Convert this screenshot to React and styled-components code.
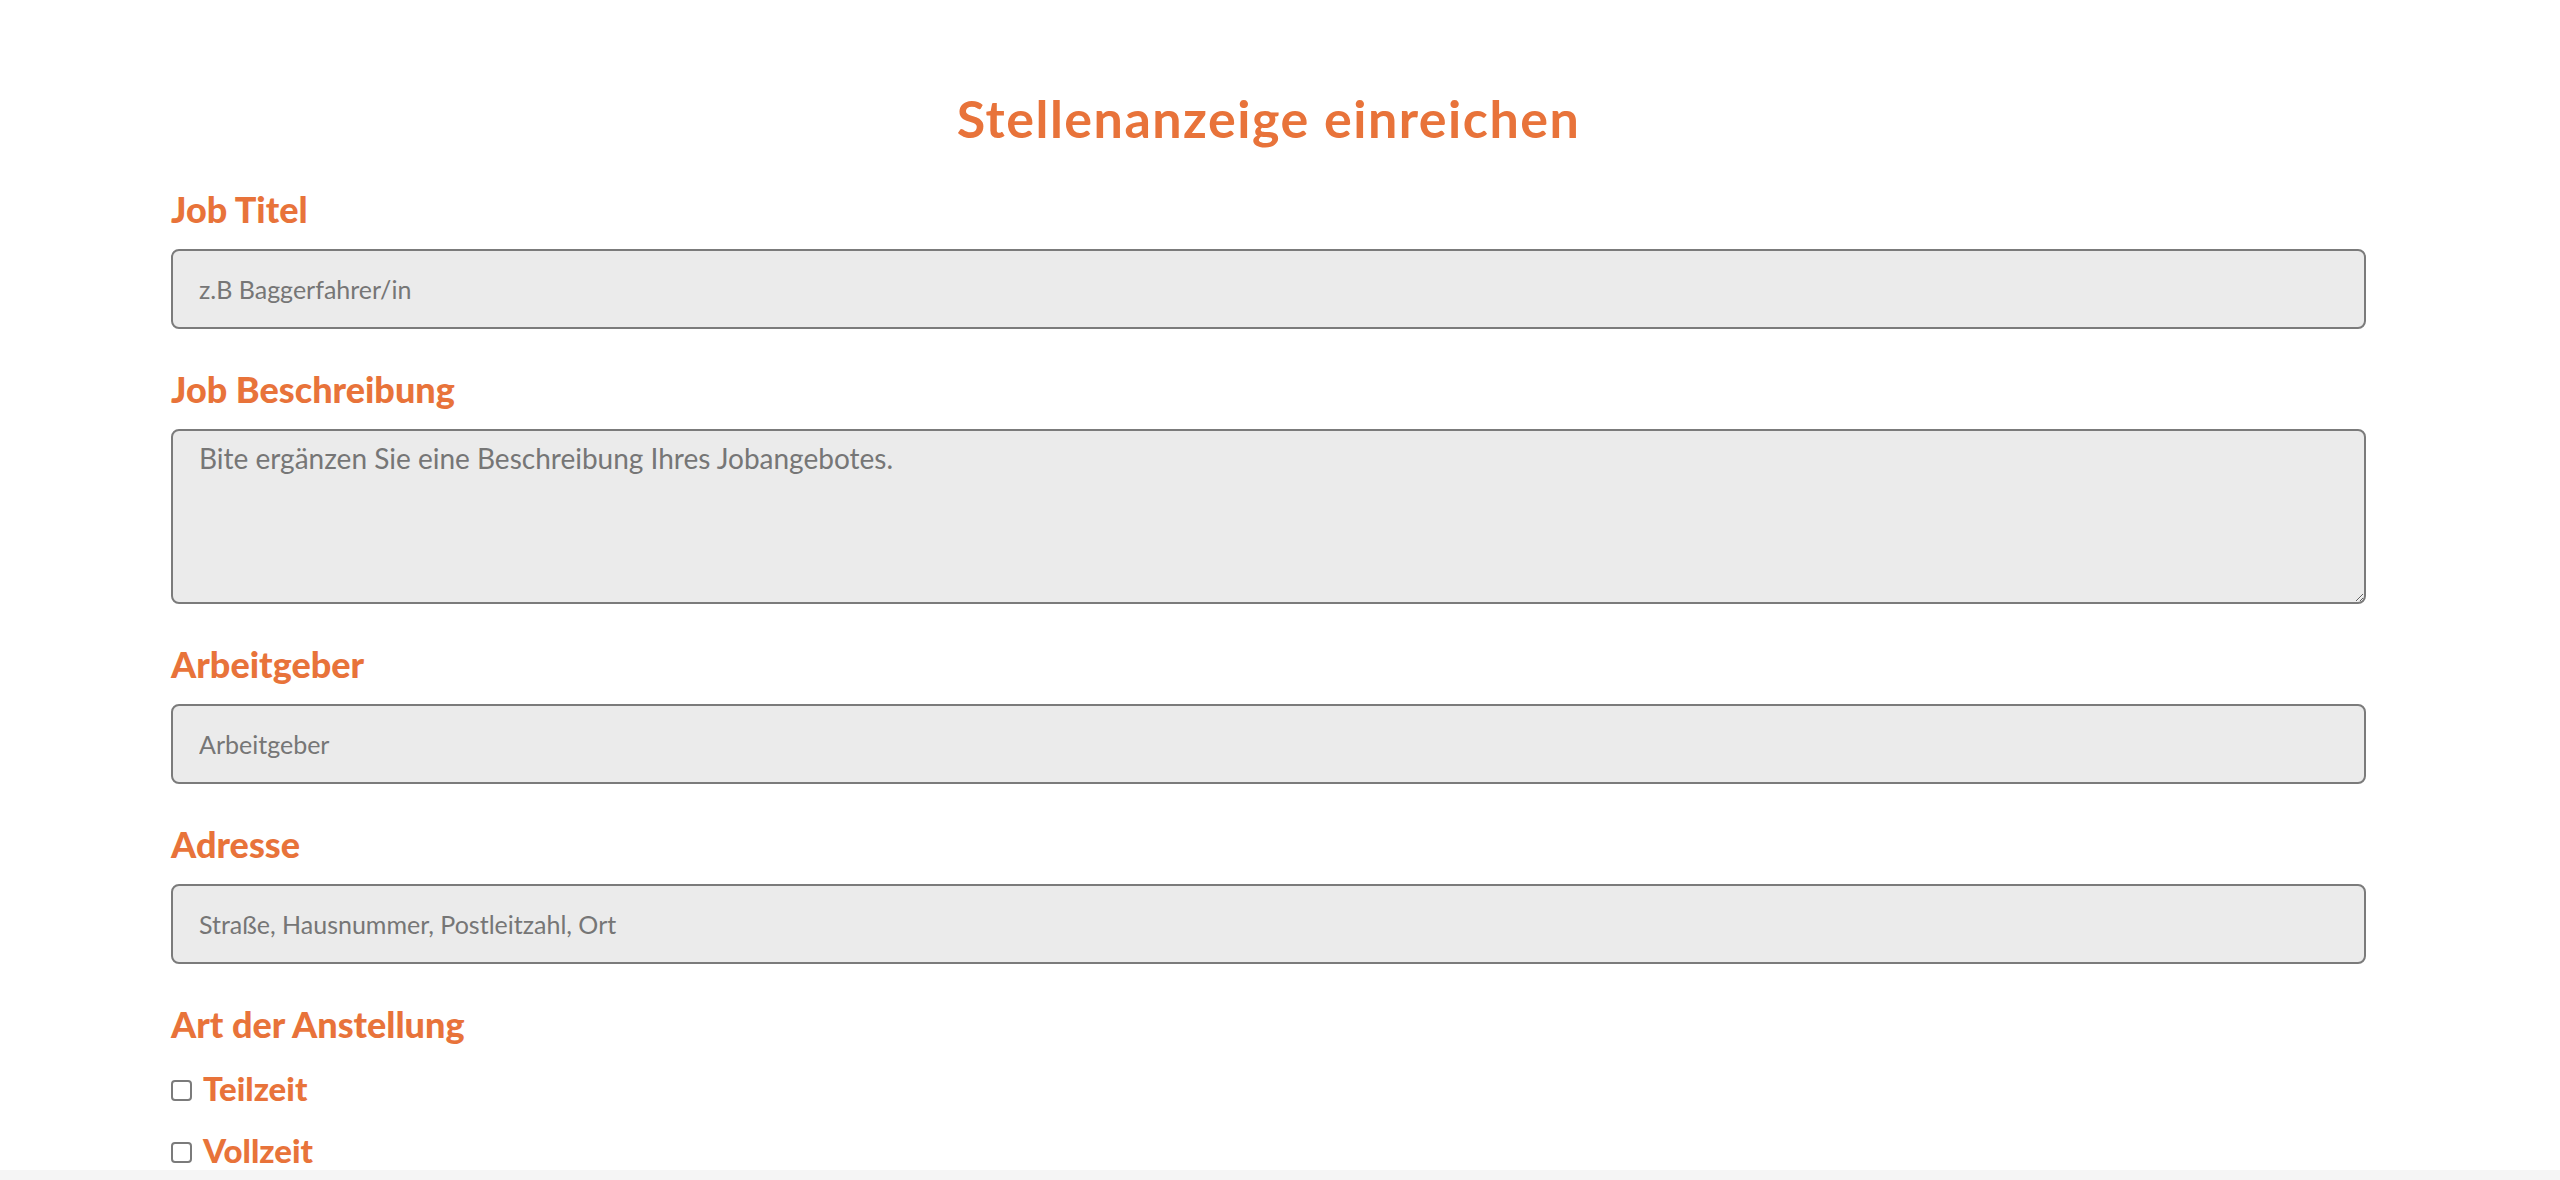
import React from 'react'
import styled, { createGlobalStyle } from 'styled-components'

const GlobalStyle = createGlobalStyle`
  html, body {
    margin: 0;
    padding: 0;
    background: #ffffff;
    font-family: "Lato", "Open Sans", sans-serif;
  }
`

const ORANGE = '#e8733a'

const Page = styled.div`
  min-height: 1170px;
  padding: 94px 194px 0 171px;
  box-sizing: border-box;
`

const Title = styled.h1`
  margin: 0 0 49px;
  font-size: 52px;
  line-height: 48px;
  font-weight: 700;
  letter-spacing: 1.5px;
  color: ${ORANGE};
  text-align: center;
`

const Form = styled.form`
  display: flex;
  flex-direction: column;
`

const Field = styled.div`
  display: flex;
  flex-direction: column;
  margin-bottom: 42px;

  &:last-child {
    margin-bottom: 0;
  }
`

const Label = styled.label`
  font-size: 36px;
  line-height: 36px;
  font-weight: 900;
  color: ${ORANGE};
  margin-bottom: 22px;
`

const inputBase = `
  width: 100%;
  box-sizing: border-box;
  background: #ebebeb;
  border: 2px solid #7b7b7b;
  border-radius: 8px;
  font-family: "Lato", "Open Sans", sans-serif;
  font-size: 25px;
  color: #333;
  padding: 0 26px;
  outline: none;
  &::placeholder {
    color: #767676;
  }
`

const TextInput = styled.input`
  ${inputBase}
  height: 80px;
`

const TextArea = styled.textarea`
  ${inputBase}
  height: 175px;
  padding-top: 11px;
  font-size: 28px;
  line-height: 1.2;
  resize: vertical;
`

const Options = styled.div`
  display: flex;
  flex-direction: column;
  gap: 29px;
  margin-top: 8px;
`

const Option = styled.label`
  display: flex;
  align-items: center;
  gap: 11px;
  font-size: 33px;
  line-height: 33px;
  font-weight: 900;
  color: ${ORANGE};
`

const Check = styled.input.attrs({ type: 'checkbox' })`
  appearance: none;
  margin: 0;
  width: 21px;
  height: 21px;
  border: 2px solid #7b7b7b;
  border-radius: 4px;
  background: #fff;
  box-sizing: border-box;
  position: relative;
  top: 2px;
`

const Footer = styled.div`
  height: 40px;
  background: #f5f5f5;
`

export default function App() {
  return (
    <>
      <GlobalStyle />
      <Page>
        <Title>Stellenanzeige einreichen</Title>
        <Form>
          <Field>
            <Label>Job Titel</Label>
            <TextInput placeholder="z.B Baggerfahrer/in" />
          </Field>
          <Field>
            <Label>Job Beschreibung</Label>
            <TextArea placeholder="Bite ergänzen Sie eine Beschreibung Ihres Jobangebotes." />
          </Field>
          <Field>
            <Label>Arbeitgeber</Label>
            <TextInput placeholder="Arbeitgeber" />
          </Field>
          <Field>
            <Label>Adresse</Label>
            <TextInput placeholder="Straße, Hausnummer, Postleitzahl, Ort" />
          </Field>
          <Field>
            <Label>Art der Anstellung</Label>
            <Options>
              <Option><Check /> Teilzeit</Option>
              <Option><Check /> Vollzeit</Option>
            </Options>
          </Field>
        </Form>
      </Page>
      <Footer />
    </>
  )
}
